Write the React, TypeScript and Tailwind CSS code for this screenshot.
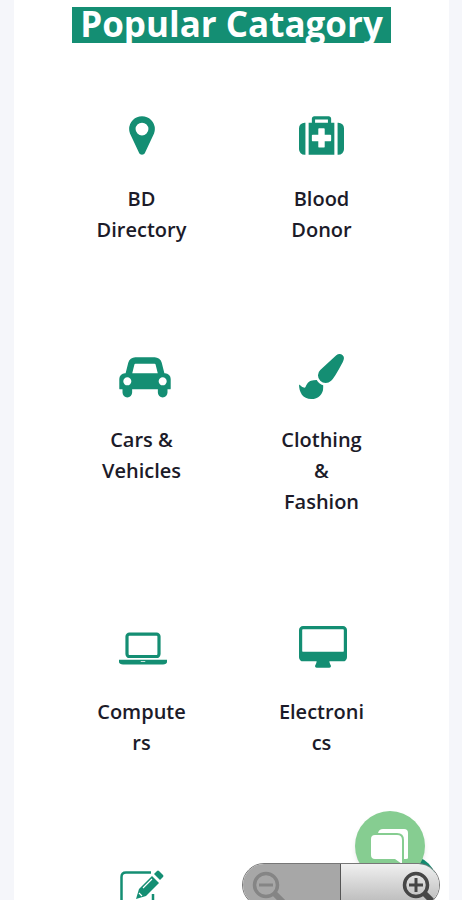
import type { ReactNode } from "react";

interface Category {
  lines: string[];
  viewBox: string;
  iconClass: string;
  path: string;
}

const categories: Category[] = [
  {
    lines: ["BD", "Directory"],
    viewBox: "0 0 1024 1792",
    iconClass: "mx-auto h-[45px] w-[26px]",
    path: "M768 640q0-106-75-181t-181-75-181 75-75 181 75 181 181 75 181-75 75-181zm256 0q0 109-33 179l-364 774q-16 33-47.5 52t-67.5 19-67.5-19-46.5-52l-365-774q-33-70-33-179 0-212 150-362t362-150 362 150 150 362z",
  },
  {
    lines: ["Blood", "Donor"],
    viewBox: "0 0 1792 1792",
    iconClass: "h-[45px] w-[45px]",
    path: "M1280 1088v-192q0-14-9-23t-23-9h-224v-224q0-14-9-23t-23-9h-192q-14 0-23 9t-9 23v224h-224q-14 0-23 9t-9 23v192q0 14 9 23t23 9h224v224q0 14 9 23t23 9h192q14 0 23-9t9-23v-224h224q14 0 23-9t9-23zm-640-704h512v-128h-512v128zm-384 0v1280h-32q-92 0-158-66t-66-158v-832q0-92 66-158t158-66h32zm1152 0v1280h-1024v-1280h128v-160q0-40 28-68t68-28h576q40 0 68 28t28 68v160h128zm384 224v832q0 92-66 158t-158 66h-32v-1280h32q92 0 158 66t66 158z",
  },
  {
    lines: ["Cars &", "Vehicles"],
    viewBox: "0 0 2048 1792",
    iconClass: "h-[45px] w-[52px]",
    path: "M480 1088q0-66-47-113t-113-47-113 47-47 113 47 113 113 47 113-47 47-113zm36-320h1016l-89-357q-2-8-14-17.5t-21-9.5h-768q-9 0-21 9.5t-14 17.5zm1372 320q0-66-47-113t-113-47-113 47-47 113 47 113 113 47 113-47 47-113zm160-96v384q0 14-9 23t-23 9h-96v128q0 80-56 136t-136 56-136-56-56-136v-128h-1024v128q0 80-56 136t-136 56-136-56-56-136v-128h-96q-14 0-23-9t-9-23v-384q0-93 65.5-158.5t158.5-65.5h28l105-419q23-94 104-157.5t179-63.5h768q98 0 179 63.5t104 157.5l105 419h28q93 0 158.5 65.5t65.5 158.5z",
  },
  {
    lines: ["Clothing", "&", "Fashion"],
    viewBox: "0 0 1792 1792",
    iconClass: "h-[45px] w-[45px]",
    path: "M1615 0q70 0 122.5 46.5t52.5 116.5q0 63-45 151-332 629-465 752-97 91-218 91-126 0-216.5-92.5t-90.5-219.5q0-128 92-212l638-579q59-54 130-54zm-909 1034q39 76 106.5 130t150.5 76l1 71q4 213-129.5 347t-348.5 134q-123 0-218-46.5t-152.5-127.5-86.5-183-29-220q7 5 41 30t62 44.5 59 36.5 46 17q41 0 55-37 25-66 57.5-112.5t69.5-76 88-47.5 103-25.5 125-10.5z",
  },
  {
    lines: ["Compute", "rs"],
    viewBox: "0 0 1920 1792",
    iconClass: "h-[45px] w-[48px]",
    path: "M416 1280q-66 0-113-47t-47-113v-704q0-66 47-113t113-47h1088q66 0 113 47t47 113v704q0 66-47 113t-113 47h-1088zm-32-864v704q0 13 9.5 22.5t22.5 9.5h1088q13 0 22.5-9.5t9.5-22.5v-704q0-13-9.5-22.5t-22.5-9.5h-1088q-13 0-22.5 9.5t-9.5 22.5zm1376 928h160v96q0 40-47 68t-113 28h-1600q-66 0-113-28t-47-68v-96h1760zm-720 96q16 0 16-16t-16-16h-160q-16 0-16 16t16 16h160z",
  },
  {
    lines: ["Electroni", "cs"],
    viewBox: "64 0 1920 1792",
    iconClass: "h-[45px] w-[48px]",
    path: "M1856 992v-832q0-13-9.5-22.5t-22.5-9.5h-1600q-13 0-22.5 9.5t-9.5 22.5v832q0 13 9.5 22.5t22.5 9.5h1600q13 0 22.5-9.5t9.5-22.5zm128-832v1088q0 66-47 113t-113 47h-544q0 37 16 77.5t32 71 16 43.5q0 26-19 45t-45 19h-512q-26 0-45-19t-19-45q0-14 16-44t32-70 16-78h-544q-66 0-113-47t-47-113v-1088q0-66 47-113t113-47h1600q66 0 113 47t47 113z",
  },
];

function CategoryCard({ label, children }: { label?: string[]; children: ReactNode }) {
  return (
    <a href="#" className="flex flex-col items-center gap-[25px] pb-[109px] text-[#1c1b29]">
      <span className="flex w-[45px]">{children}</span>
      {label && (
        <span className="text-center text-xl leading-[31px] font-semibold">
          {label.map((line) => (
            <span key={line} className="block">
              {line}
            </span>
          ))}
        </span>
      )}
    </a>
  );
}

function ChatIcon() {
  return (
    <svg viewBox="0 0 40 40" className="h-10 w-10" aria-hidden="true">
      <path d="M8 5q1-4 5-4h21q4 0 4 4v25q0 1-2 1h-2V12q0-7-7-7z" fill="#fff" />
      <path d="M5 7h22q5 0 5 5v24l-7-5H5q-4 0-4-4V11q0-4 4-4z" fill="#fff" />
    </svg>
  );
}

function Magnifier({ plus, color }: { plus?: boolean; color: string }) {
  return (
    <svg viewBox="0 0 36 36" className="h-9 w-9 shrink-0" fill="none" stroke={color} aria-hidden="true">
      <circle cx="15" cy="15" r="11.5" strokeWidth="3.5" />
      <path d={plus ? "M8 15h14M15 8v14" : "M8 15h14"} strokeWidth="3" />
      <path d="M23.5 23.5l9 9" strokeWidth="6" />
    </svg>
  );
}

export default function App() {
  return (
    <div className="h-screen overflow-hidden bg-[#f5f6fa] pr-[13px] pl-[14px] font-['Open_Sans',sans-serif]">
      <main className="flex min-h-full flex-col items-center bg-white pt-[7px]">
        <h1 className="h-9 bg-[#148e73] px-2 text-[35px] leading-[34px] font-bold whitespace-nowrap text-white">
          Popular Catagory
        </h1>

        <section className="mt-[70px] grid w-full max-w-[360px] grid-cols-2">
          {categories.map((c) => (
            <CategoryCard key={c.lines[0]} label={c.lines}>
              <svg viewBox={c.viewBox} className={`shrink-0 fill-[#148e73] ${c.iconClass}`} aria-hidden="true">
                <path d={c.path} />
              </svg>
            </CategoryCard>
          ))}
          <CategoryCard>
            <svg viewBox="0 0 45 45" className="h-[45px] w-[45px] shrink-0" aria-hidden="true">
              <path
                d="M32 5.5H7Q2.5 5.5 2.5 10V38q0 4 4 4H30q4 0 4-4V27"
                fill="none"
                stroke="#148e73"
                strokeWidth="2.5"
              />
              <path d="M33 9l7 7-13 13-10 3 3-10z" fill="#148e73" />
              <path d="M35 7l3-3q1-1 2 0l4 4q1 1 0 2l-3 3z" fill="#148e73" />
              <path d="M24 21l9-9M20 26l3 3" stroke="#fff" strokeWidth="1.2" />
            </svg>
          </CategoryCard>
        </section>
      </main>

      <button
        aria-label="Back to top"
        className="fixed right-[25px] -bottom-[13px] h-[58px] w-[58px] rounded-full bg-[#148e73]"
      />
      <button
        aria-label="Open chat"
        className="fixed right-[37px] bottom-[19px] flex h-[70px] w-[70px] items-center justify-center rounded-full bg-[#86cd91] pt-1 shadow-md"
      >
        <ChatIcon />
      </button>
      <div className="fixed right-[22px] -bottom-[7px] flex h-11 w-[198px] overflow-hidden rounded-full border border-[#777]">
        <button
          aria-label="Zoom out"
          className="flex w-1/2 items-start border-r border-[#555] bg-[#a7a7a7] pt-[6px] pl-2"
        >
          <Magnifier color="#858585" />
        </button>
        <button
          aria-label="Zoom in"
          className="flex w-1/2 items-start justify-end bg-linear-to-b from-[#f0f0f0] to-[#b8b8b8] pt-[6px] pr-[2px]"
        >
          <Magnifier plus color="#464646" />
        </button>
      </div>
    </div>
  );
}
